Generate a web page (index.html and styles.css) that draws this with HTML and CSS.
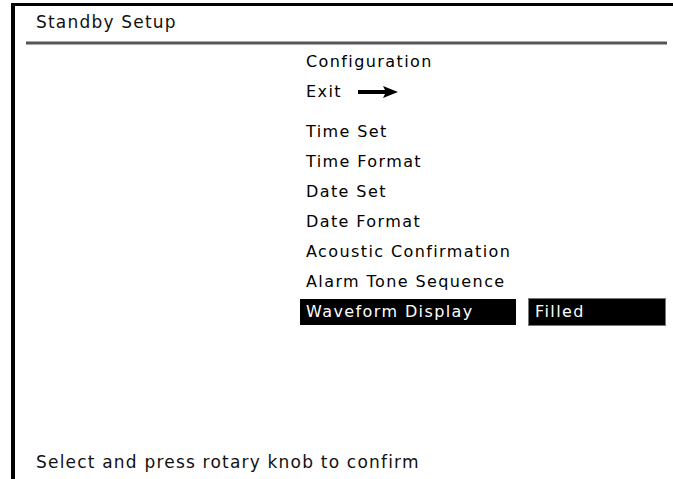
FILE: index.html
```html
<!DOCTYPE html>
<html>
<head>
<meta charset="utf-8">
<link rel="stylesheet" href="styles.css">
</head>
<body>
<div class="frame">
  <div class="title">Standby Setup</div>
  <div class="separator"></div>
  <div class="menu">
    <div class="row">Configuration</div>
    <div class="row">Exit
      <svg class="arrow" width="40" height="14" viewBox="0 0 40 14">
        <rect x="0" y="5" width="28" height="4" fill="#000"/>
        <polygon points="25,1 40,7 25,13 28,7" fill="#000"/>
      </svg>
    </div>
    <div class="row gap">Time Set</div>
    <div class="row">Time Format</div>
    <div class="row">Date Set</div>
    <div class="row">Date Format</div>
    <div class="row">Acoustic Confirmation</div>
    <div class="row">Alarm Tone Sequence</div>
    <div class="row selected">
      <span class="sel-label">Waveform Display</span>
      <span class="sel-value">Filled</span>
    </div>
  </div>
  <div class="footer">Select and press rotary knob to confirm</div>
</div>
</body>
</html>
```
FILE: styles.css
```css
html, body {
  margin: 0;
  padding: 0;
  background: #fff;
}
body {
  width: 673px;
  height: 479px;
  overflow: hidden;
}
.frame {
  box-sizing: border-box;
  margin: 3px 0 0 11px;
  height: 476px;
  border-top: 3px solid #000;
  border-left: 4px solid #000;
  display: flex;
  flex-direction: column;
  font-family: "DejaVu Sans", sans-serif;
  color: #111;
}
.title {
  padding: 4px 0 0 21px;
  font-size: 17px;
  letter-spacing: 1.2px;
  line-height: 24px;
}
.separator {
  margin: 7px 0 0 11px;
  width: 641px;
  height: 2px;
  background: #555;
  border-top: 1px solid #a8a8a8;
  border-bottom: 1px solid #a8a8a8;
}
.menu {
  margin: 2px 0 0 285px;
  display: flex;
  flex-direction: column;
  font-size: 16px;
  letter-spacing: 1.4px;
  color: #000;
}
.row {
  height: 30px;
  line-height: 30px;
  padding-left: 6px;
  display: flex;
  align-items: center;
  white-space: nowrap;
}
.row.gap {
  margin-top: 10px;
}
.arrow {
  margin-left: 16px;
}
.row.selected {
  padding-left: 0;
}
.sel-label, .sel-value {
  box-sizing: border-box;
  height: 26px;
  line-height: 26px;
  background: #000;
  color: #fff;
  padding-left: 6px;
}
.sel-label {
  width: 216px;
}
.sel-value {
  margin-left: 13px;
  width: 136px;
  outline: 1px solid #777;
}
.footer {
  margin-top: auto;
  padding: 0 0 5px 21px;
  font-size: 17px;
  letter-spacing: 1.2px;
  line-height: 24px;
}
```
